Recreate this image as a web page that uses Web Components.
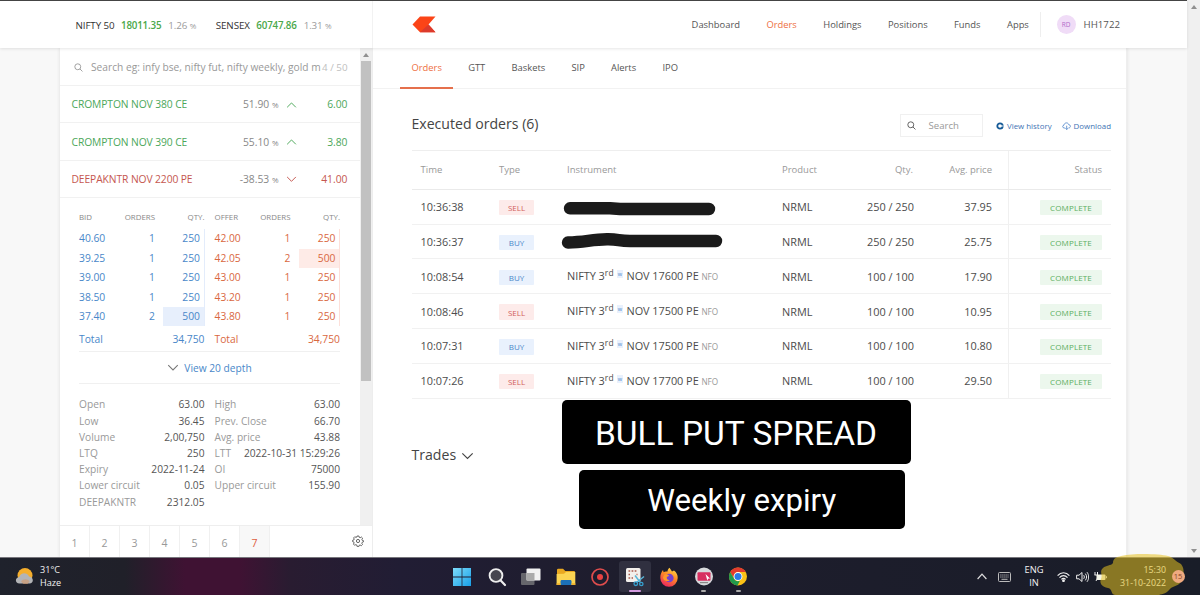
<!DOCTYPE html>
<html lang="en">
<head>
<meta charset="utf-8">
<title>Kite - Orders</title>
<style>
  html, body { margin: 0; height: 100%; overflow: hidden; }
  body { font-family: "Open Sans", "Noto Sans", sans-serif; color: #444; background: #f8f8f8; }
</style>
</head>
<body>
<kite-app></kite-app>

<script>
// Base class: every element only supplies its markup
class KiteElement extends HTMLElement {
  constructor() {
    super();
    this.attachShadow({ mode: 'open' });
  }

  connectedCallback() {
    this.shadowRoot.innerHTML = `<style>:host, * { box-sizing: border-box; }</style>${this.template()}`;
  }
}

const CHEVRON = {
  up: 'M1 6.5 5.5 2 10 6.5',
  down: 'M1 2 5.5 6.5 10 2',
};

const chevron = (dir, width = 11) =>
  `<svg width="${width}" height="${width * 0.75}" viewBox="0 0 11 8.5" fill="none" stroke="currentColor" stroke-width="1"><path d="${CHEVRON[dir]}"/></svg>`;

const magnifier = (size) =>
  `<svg width="${size}" height="${size}" viewBox="0 0 10 10" fill="none" stroke="currentColor" stroke-width="1"><circle cx="4.2" cy="4.2" r="3.3"/><path d="M6.6 6.6 9.4 9.4"/></svg>`;

/* ---------- top bar ---------- */

class IndexTicker extends KiteElement {
  template() {
    return `
      <style>
        :host { display: flex; align-items: baseline; white-space: nowrap; font-size: 9.8px; }
        .name { color: #333; font-weight: 500; letter-spacing: -0.1px; }
        .value { color: #4aa84a; font-weight: 600; margin: 0 7px 0 6.5px; letter-spacing: -0.2px; }
        .change { color: #9b9b9b; letter-spacing: -0.1px; }
        small { font-size: 8px; }
      </style>
      <span class="name">${this.getAttribute('name')}</span>
      <span class="value">${this.getAttribute('value')}</span>
      <span class="change">${this.getAttribute('change')} <small>%</small></span>`;
  }
}
customElements.define('index-ticker', IndexTicker);

class KiteHeader extends KiteElement {
  template() {
    return `
      <style>
        :host {
          display: flex; height: 48px; background: #fff; position: relative; z-index: 2;
          border-top: 1px solid #444; box-shadow: 0 1px 3px rgba(0, 0, 0, .1);
        }
        .indices { display: flex; align-items: center; gap: 19.5px; width: 373px; padding: 2px 0 0 75.5px; border-right: 1px solid #f2f2f2; }
        .main { display: flex; align-items: center; width: 754px; padding: 0 7px 0 39px; }
        nav { display: flex; align-items: center; margin-left: auto; gap: 26.4px; font-size: 9.4px; color: #555; }
        .active { color: #ee7044; }
        .user { display: flex; align-items: center; gap: 8px; border-left: 1px solid #eee; height: 25px; padding-left: 15.5px; margin-left: -15.2px; font-size: 9.7px; }
        .avatar { display: grid; place-items: center; width: 19px; height: 19px; border-radius: 50%; background: #f0dcf7; color: #b06cc8; font-size: 6.5px; }
      </style>
      <div class="indices">
        <index-ticker name="NIFTY 50" value="18011.35" change="1.26"></index-ticker>
        <index-ticker name="SENSEX" value="60747.86" change="1.31"></index-ticker>
      </div>
      <div class="main">
        <svg width="24" height="17" viewBox="0 0 24 17">
          <path d="M8 .5H23.5L16.5 8.5 23.5 16.3H8L.5 8.5Z" fill="#fb4417"/>
          <path d="M16.5 8.5 23.5 16.3H8Z" fill="#dc3a2c"/>
        </svg>
        <nav>
          <span>Dashboard</span><span class="active">Orders</span><span>Holdings</span>
          <span>Positions</span><span>Funds</span><span>Apps</span>
          <div class="user"><span class="avatar">RD</span><span>HH1722</span></div>
        </nav>
      </div>`;
  }
}
customElements.define('kite-header', KiteHeader);

/* ---------- market watch ---------- */

class WatchRow extends KiteElement {
  template() {
    const up = this.getAttribute('dir') === 'up';
    return `
      <style>
        :host {
          display: flex; align-items: center; height: 37.4px; padding: 0 12.5px 0 11.5px;
          border-bottom: 1px solid #f1f1f1; font-size: 10.3px; color: ${up ? '#4ca75a' : '#c5574f'};
        }
        .name { flex: 1; white-space: nowrap; letter-spacing: -0.1px; }
        .pct { color: #888; }
        small { font-size: 8px; }
        svg { margin: 1px 0 0 7px; }
        .price { width: 51px; text-align: right; }
      </style>
      <span class="name"><slot></slot></span>
      <span class="pct">${this.getAttribute('pct')} <small>%</small></span>
      ${chevron(up ? 'up' : 'down')}
      <span class="price">${this.getAttribute('price')}</span>`;
  }
}
customElements.define('watch-row', WatchRow);

class DepthTable extends KiteElement {
  template() {
    const rows = this.getAttribute('rows').split(';').map((r) => r.split(','));
    const buy = this.getAttribute('side') === 'buy';
    return `
      <style>
        :host { display: block; width: 125.5px; font-size: 10.3px; color: ${buy ? '#4987c9' : '#d9683f'}; }
        .row { display: grid; grid-template-columns: 45px 31px 1fr; height: 19.4px; line-height: 19.4px; text-align: right; }
        .row > :first-child { text-align: left; }
        .head { height: 22.3px; line-height: 20.5px; font-size: 7.9px; color: #888; }
        .qty { padding-right: 3.5px; margin-left: 8px; border-right: 1px solid ${buy ? '#e3ecfb' : '#fde0da'}; }
        .full { background: ${buy ? '#e7effc' : '#feebe7'}; }
        .total { display: flex; justify-content: space-between; align-items: center; height: 25px; }
      </style>
      <div class="row head"><span>${this.getAttribute('label')}</span><span>ORDERS</span><span>QTY.</span></div>
      ${rows.map(([price, orders, qty]) => `
        <div class="row"><span>${price}</span><span>${orders}</span><span class="qty ${qty === '500' ? 'full' : ''}">${qty}</span></div>`).join('')}
      <div class="total"><span>Total</span><span>34,750</span></div>`;
  }
}
customElements.define('depth-table', DepthTable);

class ScrollBar extends KiteElement {
  template() {
    return `
      <style>
        :host { display: flex; flex-direction: column; align-items: center; background: #f0f0f0; }
        .arrow { width: 0; height: 0; border: 3px solid transparent; border-top-width: 0; border-bottom: 4px solid #909090; margin: 4.5px 0; }
        .down { transform: rotate(180deg); margin-top: auto; }
        .thumb { width: 10px; background: #c1c1c1; }
      </style>
      <div class="arrow"></div>
      <div class="thumb" style="height:${this.getAttribute('thumb') || 0}px"></div>
      ${this.hasAttribute('down') ? '<div class="arrow down"></div>' : ''}`;
  }
}
customElements.define('scroll-bar', ScrollBar);

const STATS = [
  ['Open', '63.00', 'High', '63.00'],
  ['Low', '36.45', 'Prev. Close', '66.70'],
  ['Volume', '2,00,750', 'Avg. price', '43.88'],
  ['LTQ', '250', 'LTT', '2022-10-31 15:29:26'],
  ['Expiry', '2022-11-24', 'OI', '75000'],
  ['Lower circuit', '0.05', 'Upper circuit', '155.90'],
  ['DEEPAKNTR', '2312.05'],
];

class MarketWatch extends KiteElement {
  template() {
    const pair = (label, value) =>
      label ? `<div class="stat"><span>${label}</span><b>${value}</b></div>` : '<div></div>';
    return `
      <style>
        :host { display: flex; flex-direction: column; width: 313px; background: #fff; border-right: 1px solid #f0f0f0; box-shadow: -1px 0 3px rgba(0, 0, 0, .07); }
        .body { display: flex; height: 477px; }
        .list { flex: 1; }
        .search { display: flex; align-items: center; height: 38px; padding: 1px 12.5px 0 13.5px; border-bottom: 1px solid #f1f1f1; font-size: 10.2px; color: #999; }
        .query { margin-left: 8.5px; white-space: nowrap; }
        .count { margin-left: auto; font-size: 9.8px; color: #c0c0c0; white-space: nowrap; }
        .depth { display: flex; gap: 10px; padding: 9px 0 0 19px; }
        .more { display: flex; align-items: center; justify-content: center; gap: 5px; height: 33px; margin: 0 20px 0 19px; border: solid #f0f0f0; border-width: 1px 0; font-size: 10.2px; color: #4987c9; }
        .more svg { color: #777; }
        .stats { display: grid; grid-template-columns: 125.5px 125.5px; column-gap: 10px; padding: 12px 0 0 19px; font-size: 10.2px; }
        .stat { display: flex; justify-content: space-between; height: 16.2px; line-height: 16.2px; white-space: nowrap; color: #999; }
        .stat b { font-weight: 400; color: #555; }
        scroll-bar { width: 12px; }
        .tabs { display: flex; align-items: center; height: 33px; border-top: 1px solid #eee; font-size: 10.5px; color: #999; }
        .tabs span { width: 30px; height: 100%; line-height: 34px; text-align: center; border-right: 1px solid #f0f0f0; }
        .tabs .on { background: #f8f8f8; color: #df5f3f; }
        .tabs svg { margin: 0 8px 2px auto; }
      </style>
      <div class="body">
        <div class="list">
          <div class="search">
            ${magnifier(9)}
            <span class="query">Search eg: infy bse, nifty fut, nifty weekly, gold m</span>
            <span class="count">4 / 50</span>
          </div>
          <watch-row dir="up" pct="51.90" price="6.00">CROMPTON NOV 380 CE</watch-row>
          <watch-row dir="up" pct="55.10" price="3.80">CROMPTON NOV 390 CE</watch-row>
          <watch-row dir="down" pct="-38.53" price="41.00">DEEPAKNTR NOV 2200 PE</watch-row>
          <div class="depth">
            <depth-table side="buy" label="BID" rows="40.60,1,250;39.25,1,250;39.00,1,250;38.50,1,250;37.40,2,500"></depth-table>
            <depth-table side="sell" label="OFFER" rows="42.00,1,250;42.05,2,500;43.00,1,250;43.20,1,250;43.80,1,250"></depth-table>
          </div>
          <div class="more">${chevron('down', 12)} View 20 depth</div>
          <div class="stats">${STATS.map((s) => pair(s[0], s[1]) + pair(s[2], s[3])).join('')}</div>
        </div>
        <scroll-bar thumb="320"></scroll-bar>
      </div>
      <div class="tabs">
        ${[1, 2, 3, 4, 5, 6, 7].map((n) => `<span class="${n === 7 ? 'on' : ''}">${n}</span>`).join('')}
        <svg width="12" height="12" viewBox="0 0 12 12" fill="none" stroke="#555" stroke-width=".9">
          <path d="M5.1 1h1.8l.3 1.3 1 .4 1.2-.7 1.2 1.2-.7 1.2.4 1 1.1.2v1.3l-1.2.4-.4 1 .7 1.2-1.2 1.2-1.2-.7-1 .4-.3 1.2H5.2L4.8 10l-1-.4-1.2.7-1.1-1.2.6-1.2-.4-1L.6 6.6V5.3l1.2-.3.4-1L1.6 2.9 2.8 1.7l1.1.7 1-.4Z"/>
          <circle cx="6" cy="6" r="1.6"/>
        </svg>
      </div>`;
  }
}
customElements.define('market-watch', MarketWatch);

/* ---------- orders ---------- */

class TagLabel extends KiteElement {
  template() {
    return `
      <style>
        :host { display: inline-flex; align-items: center; justify-content: center; width: 35px; height: 15.5px; font-size: 8px; border-radius: 1px; }
        :host([kind="SELL"]) { background: #fdebea; color: #d2605c; }
        :host([kind="BUY"]) { background: #e9f1fd; color: #4987c9; }
        :host([kind="COMPLETE"]) { background: #ecf7ed; color: #5bae60; width: 62px; letter-spacing: 0.15px; }
      </style>${this.getAttribute('kind')}`;
  }
}
customElements.define('tag-label', TagLabel);

// Marker strokes hiding the first two instruments
const REDACTED = [
  '<path d="M10 18.3H50L60 19H149" stroke-width="12.4"/>',
  '<path d="M8 18.5C25 18 32 15.500 47 15.3C59 15.1 58 17 70 17H156" stroke-width="12.4"/>',
];

const ORDERS = [
  ['10:36:38', 'SELL', null, '250 / 250', '37.95'],
  ['10:36:37', 'BUY', null, '250 / 250', '25.75'],
  ['10:08:54', 'BUY', '17600', '100 / 100', '17.90'],
  ['10:08:46', 'SELL', '17500', '100 / 100', '10.95'],
  ['10:07:31', 'BUY', '17500', '100 / 100', '10.80'],
  ['10:07:26', 'SELL', '17700', '100 / 100', '29.50'],
];

class OrdersTable extends KiteElement {
  instrument(strike, i) {
    if (!strike) {
      return `<svg class="marker" width="170" height="34" viewBox="0 0 170 34" fill="none" stroke="#1b1b1b" stroke-linecap="round" stroke-linejoin="round">${REDACTED[i]}</svg>`;
    }
    return `NIFTY 3<sup>rd</sup> <sup class="w">w</sup> NOV ${strike} PE <small>NFO</small>`;
  }

  template() {
    return `
      <style>
        :host { display: block; border-top: 1px solid #eee; }
        .row {
          display: grid; grid-template-columns: 78.5px 68px 215px 85px 46px 95.5px 1fr;
          height: 34.8px; padding-left: 9px; border-bottom: 1px solid #f1f1f1;
          align-items: center; font-size: 10.9px; color: #4c4c4c; white-space: nowrap;
        }
        .head { height: 38.8px; font-size: 9.5px; color: #999; border-color: #eaeaea; }
        .num { text-align: right; }
        .price { text-align: right; height: 100%; display: flex; align-items: center; justify-content: flex-end; padding-right: 15.5px; border-right: 1px solid #f0f0f0; }
        .status { display: flex; justify-content: flex-end; padding-right: 9px; }
        tag-label { margin-top: 2px; }
        .inst { position: relative; letter-spacing: -0.03px; line-height: 20px; padding-top: 1px; }
        .marker { position: absolute; left: -7px; top: -16.5px; }
        sup { font-size: 8.5px; line-height: 0; vertical-align: 4px; letter-spacing: 0.2px; }
        sup.w { font-size: 5.5px; color: #4987c9; background: #e9f1fd; padding: 0 1px; margin-right: 0.5px; }
        small { font-size: 8.2px; color: #999; }
      </style>
      <div class="row head">
        <span>Time</span><span>Type</span><span>Instrument</span><span>Product</span>
        <span class="num">Qty.</span><span class="price">Avg. price</span><span class="status">Status</span>
      </div>
      ${ORDERS.map(([time, type, strike, qty, price], i) => `
        <div class="row">
          <span>${time}</span>
          <span><tag-label kind="${type}"></tag-label></span>
          <div class="inst">${this.instrument(strike, i)}</div>
          <span>NRML</span>
          <span class="num">${qty}</span>
          <span class="price">${price}</span>
          <span class="status"><tag-label kind="COMPLETE"></tag-label></span>
        </div>`).join('')}`;
  }
}
customElements.define('orders-table', OrdersTable);

class OrdersPage extends KiteElement {
  template() {
    return `
      <style>
        :host { display: block; width: 754px; background: #fff; border-right: 1px solid #eee; box-shadow: 1px 0 3px rgba(0, 0, 0, .07); }
        .tabs { display: flex; height: 41px; padding-left: 27px; border-bottom: 1px solid #f2f2f2; font-size: 9.4px; color: #555; }
        .tabs span { height: 41px; line-height: 40px; padding: 0 11.5px; margin-right: 3.2px; }
        .tabs .on { color: #ee7044; border-bottom: 2px solid #e5704c; }
        .content { padding: 0 15px 0 38.5px; }
        .title { display: flex; align-items: center; height: 61px; padding-top: 12px; }
        h3 { margin: -5px auto 0 0; font-size: 14.1px; font-weight: 400; }
        .find { display: flex; align-items: center; gap: 12px; width: 83px; height: 22.5px; padding-left: 6px; border: 1px solid #f0f0f0; font-size: 9.6px; color: #999; }
        .find svg { color: #555; }
        .link { display: flex; align-items: center; gap: 2.5px; margin-left: 10.5px; font-size: 7.9px; color: #3f74b5; white-space: nowrap; }
        .find + .link { margin-left: 13px; }
        .trades { display: flex; align-items: center; gap: 5px; margin-top: 46.5px; font-size: 14.1px; }
        .trades svg { margin-top: 3px; }
      </style>
      <div class="tabs">
        <span class="on">Orders</span><span>GTT</span><span>Baskets</span><span>SIP</span><span>Alerts</span><span>IPO</span>
      </div>
      <div class="content">
        <div class="title">
          <h3>Executed orders (6)</h3>
          <div class="find">${magnifier(9)}Search</div>
          <div class="link">
            <svg width="8" height="8" viewBox="0 0 8 8" fill="none" stroke="#155a97"><circle cx="4" cy="4" r="2.7" stroke-width="1.8"/><path d="M4 4H7.5" stroke="#fff" stroke-width=".8"/></svg>View history
          </div>
          <div class="link">
            <svg width="9" height="8" viewBox="0 0 9 8" fill="none" stroke="#5d8fce" stroke-width=".9"><path d="M3 6H2.2C.2 6 .2 3.3 2 3.1 2.3.3 6.2.2 6.7 2.6 9 2.7 9 6 6.5 6M4.7 3.7V7.5M3.3 6.2 4.7 7.5 6.1 6.2"/></svg>Download
          </div>
        </div>
        <orders-table></orders-table>
        <div class="trades">Trades ${chevron('down', 13)}</div>
      </div>`;
  }
}
customElements.define('orders-page', OrdersPage);

// Caption stuck over the page
class CaptionBox extends KiteElement {
  template() {
    return `
      <style>
        :host { position: absolute; z-index: 3; display: grid; place-items: center; padding-top: 3px; background: #000; color: #fff; border-radius: 5px; font-family: Roboto, sans-serif; white-space: nowrap; }
      </style><span><slot></slot></span>`;
  }
}
customElements.define('caption-box', CaptionBox);

/* ---------- taskbar ---------- */

const TASK_ICONS = {
  start: `<defs><linearGradient id="g" x2="1" y2="1"><stop stop-color="#7ddcfb"/><stop offset="1" stop-color="#189fe8"/></linearGradient></defs>
    <path fill="url(#g)" d="M1 1h8.6v8.6H1ZM10.4 1H19v8.6h-8.6ZM1 10.4h8.6V19H1ZM10.4 10.4H19V19h-8.6Z"/>`,
  search: `<circle cx="9" cy="8.5" r="6.4" fill="#46464f" stroke="#eee" stroke-width="1.9"/><path d="M13.7 13.5 18 18" stroke="#eee" stroke-width="2.2" stroke-linecap="round"/>`,
  views: `<rect x="0" y="6" width="13.5" height="12" rx="1" fill="#66666c"/><rect x="5.5" y="1.5" width="14" height="12" rx="1" fill="#f1f1f1"/><path d="M5.5 6h8v7.5h-8Z" fill="#aaa"/>`,
  files: `<path d="M1 3a1.2 1.2 0 0 1 1.2-1.2H7L9.3 4H18a1 1 0 0 1 1 1v12H1Z" fill="#e9a820"/><path d="M.6 7 8 6.8 10 5h9.3v13H.6Z" fill="#fbd452"/><path d="M4.5 18v-3.5c0-1 .6-1.5 1.5-1.5h8c1 0 1.5.5 1.5 1.5V18Z" fill="#1c6fb5"/><path d="M.6 16.3h3.9V18H.6ZM15.5 16.3h3.8V18h-3.8Z" fill="#eeb12e"/>`,
  record: `<circle cx="10" cy="10" r="8" fill="none" stroke="#e04d4d" stroke-width="1.7"/><circle cx="10" cy="10" r="3" fill="#e94242"/>`,
  snip: `<rect x="1" y="1" width="14.5" height="14" rx="1.5" fill="#f3f0ec"/><path d="M3.5 4H12.5M3.5 7.5H5M3.5 11H8M11.5 7.5H12.5" stroke="#a9584b" stroke-width="1.7" stroke-dasharray="1.7 1.4"/>
    <path d="M10 8.5 15 15M19 9.5 11.5 15.5" stroke="#58b6d9" stroke-width="1.5"/><circle cx="10.8" cy="16.7" r="1.8" fill="none" stroke="#36a0ce" stroke-width="1.3"/><circle cx="16.3" cy="17" r="1.7" fill="none" stroke="#36a0ce" stroke-width="1.3"/>`,
  firefox: `<defs><linearGradient id="f" x1=".8" x2=".3" y2="1"><stop stop-color="#ffe04b"/><stop offset=".45" stop-color="#ff8b25"/><stop offset="1" stop-color="#ec2461"/></linearGradient></defs>
    <path d="M10.5.8 13 4.6 15 3.5C17.6 5.5 18.8 8 18.7 11A8.7 8.7 0 0 1 1.3 11C1.2 7.5 2.5 5 4 3L4.6 5.3C6 4.2 7 4.5 8.5 4.6 8.5 3 9.3 1.8 10.5.8Z" fill="url(#f)"/>
    <circle cx="10.3" cy="11" r="4.3" fill="#7542cf"/><path d="M5.5 7.5c2-.8 3.5 0 4.8 1.2l-2.5 1.2c-.4 2 1 3.3 3 3-2.5 2.6-7 .6-6.7-3Z" fill="#ff9a2a"/>`,
  recorder: `<circle cx="10" cy="9.5" r="9" fill="#d7d9dc"/><rect x="3.5" y="5.2" width="13" height="8.6" rx="1" fill="#d72e5f"/><path d="m11.5 7 4.500 4.500-2 .2-.6 2Z" fill="#fff"/><path d="M6 15.6h8" stroke="#888" stroke-width="1.2"/>`,
  chrome: `<circle cx="10" cy="9.5" r="9" fill="#fbc116"/><path d="M2.2 5A9 9 0 0 1 17.8 5H10a4.5 4.5 0 0 0-4 6.5Z" fill="#e33b2e"/><path d="M2.2 5 6.1 11.7A4.5 4.5 0 0 0 12 13.6L9.5 18.5A9 9 0 0 1 2.2 5Z" fill="#229a4c"/><circle cx="10" cy="9.5" r="4.4" fill="#fff"/><circle cx="10" cy="9.5" r="3.5" fill="#2c7be5"/>`,
};

class TaskBar extends KiteElement {
  template() {
    const running = ['snip', 'recorder', 'chrome'];
    return `
      <style>
        :host {
          display: flex; align-items: center; height: 38px; position: relative; color: #f2f2f2; font-size: 9.1px; line-height: 12.4px;
          background: linear-gradient(90deg, #1f222c 0, #202029 125px, #3f1233 185px, #3f1233 240px, #291c31 290px, #211d34 400px, #1e1d2d 620px, #1b1d2a 1000px, #191d28);
          border-top: 1px solid #77767c;
        }
        .weather { display: flex; align-items: center; gap: 6px; width: 446px; padding-left: 15px; }
        .apps { display: flex; gap: 2.5px; flex: 1; }
        .app { display: grid; place-items: center; width: 32px; height: 31px; border-radius: 3px; position: relative; }
        .app.snip { background: #303040; }
        .app.run::after { content: ""; position: absolute; bottom: 0; width: 5px; height: 2px; border-radius: 1px; background: #aaa; }
        .app.snip::after { width: 12px; background: #d49be0; }
        .tray { display: flex; align-items: center; }
        .lang { width: 20px; text-align: center; margin: 0 13px 0 13px; font-size: 9.3px; }
        .sys { display: flex; align-items: center; gap: 5.5px; }
        .clock { width: 59px; text-align: right; font-size: 8.8px; }
        .badge { display: grid; place-items: center; width: 13px; height: 13px; margin: 0 15.5px 0 5.5px; border-radius: 50%; background: #f0aa80; color: #8a4526; font-size: 7.5px; position: relative; z-index: 1; }
        .ink { position: absolute; left: 1097px; top: -6px; }
      </style>
      <div class="weather">
        <svg width="19" height="19" viewBox="0 0 19 19">
          <circle cx="10" cy="8.5" r="7.5" fill="#f5ae2c"/>
          <path d="M4.5 16.5C-.5 16.5 0 10.5 4.2 10 5.5 5.5 12 4.7 14 9.5c5 .5 5 7 .5 7Z" fill="#b3b4b6"/>
          <path d="M6 14.5c2-3 7-3 8.5 0l-2 2.5h-4Z" fill="#cf9a72" opacity=".7"/>
        </svg>
        <div>31°C<br>Haze</div>
      </div>
      <div class="apps">
        ${Object.entries(TASK_ICONS).map(([name, icon]) => `
          <div class="app ${name} ${running.includes(name) ? 'run' : ''}"><svg width="20" height="20" viewBox="0 0 20 20">${icon}</svg></div>`).join('')}
      </div>
      <div class="tray">
        <svg width="10" height="7" viewBox="0 0 10 7" fill="none" stroke="#ddd" stroke-width="1.2"><path d="M.6 6 5 1.2 9.4 6"/></svg>
        <svg style="margin-left:11px" width="13" height="10" viewBox="0 0 13 10" fill="none" stroke="#bbb"><rect x=".5" y=".5" width="12" height="9" rx="1"/><path d="M2.3 3h8.5M2.3 5h8.5" stroke-dasharray="1.2 .8"/><path d="M3.5 7.3h6"/></svg>
        <div class="lang">ENG<br>IN</div>
        <div class="sys">
          <svg width="13" height="10" viewBox="0 0 13 10" fill="none" stroke="#eee" stroke-width="1.2"><path d="M.6 3.6C4-.2 9-.2 12.4 3.6M2.5 5.6c2.3-2.6 5.7-2.6 8 0M4.4 7.4c1.3-1.3 2.9-1.3 4.2 0"/><circle cx="6.5" cy="8.7" r=".8" fill="#eee"/></svg>
          <svg width="13" height="12" viewBox="0 0 13 12" fill="none" stroke="#eee"><path d="M.6 4.2H3L6 1.5v9L3 7.8H.6ZM7.7 4.2c.8 1 .8 2.6 0 3.6M9.3 2.6c1.7 2 1.7 4.8 0 6.8M11 1.2c2.2 2.9 2.2 6.7 0 9.6"/></svg>
          <svg width="13" height="11" viewBox="0 0 13 11" fill="none"><path d="M1 1v3M3.5 1v3M.5 4h3.5v2L2 10" stroke="#eee"/><rect x="2.5" y="3.5" width="9" height="5.5" rx="1" fill="#f4f4e6"/><path d="M12.4 5.2v2" stroke="#eee"/></svg>
        </div>
        <div class="clock">15:30<br>31-10-2022</div>
        <span class="badge">15</span>
      </div>
      <svg class="ink" width="90" height="44" viewBox="0 0 90 44">
        <path d="M16 11C16 6 20 5 24 4 38 1 62 2 71 4 76 5 78 9 84 12 88 17 87 24 84 29 83 34 75 34 73 37 70 41 66 42 62 43H18C13 42 16 37 11 36 5 35 2 31 4 27 6 23 2 19 6 16 9 13 14 14 16 11Z" fill="rgba(230,193,33,.55)"/>
      </svg>`;
  }
}
customElements.define('task-bar', TaskBar);

class KiteApp extends KiteElement {
  template() {
    return `
      <style>
        :host { display: flex; flex-direction: column; width: 1200px; height: 595px; overflow: hidden; position: relative; }
        .window { display: flex; height: 557px; }
        .page { width: 1187px; }
        .columns { display: flex; height: 510px; padding-left: 60px; }
        .window > scroll-bar { width: 13px; }
        .title { left: 561.5px; top: 399.5px; width: 349px; height: 64px; font-size: 33.5px; }
        .subtitle { left: 578.5px; top: 469.5px; width: 326.5px; height: 59.5px; font-size: 31.2px; }
      </style>
      <div class="window">
        <div class="page">
          <kite-header></kite-header>
          <div class="columns">
            <market-watch></market-watch>
            <orders-page></orders-page>
          </div>
        </div>
        <scroll-bar down></scroll-bar>
      </div>
      <task-bar></task-bar>
      <caption-box class="title">BULL PUT SPREAD</caption-box>
      <caption-box class="subtitle">Weekly expiry</caption-box>`;
  }
}
customElements.define('kite-app', KiteApp);
</script>
</body>
</html>
